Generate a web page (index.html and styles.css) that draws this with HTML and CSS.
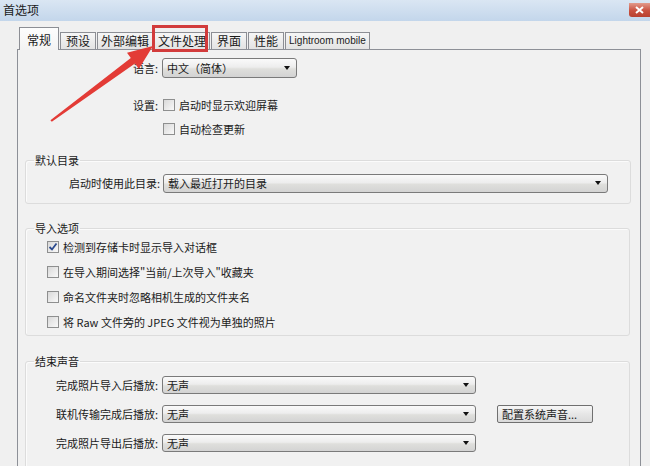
FILE: index.html
```html
<!DOCTYPE html>
<html lang="zh-CN">
<head>
    <meta charset="UTF-8">
    <title>首选项</title>
    <link rel="stylesheet" href="styles.css">
</head>
<body>
    <div class="titlebar">
        <span class="title">首选项</span>
        <span class="close">
            <svg width="9" height="8" viewBox="0 0 9 8"><path d="M1 1 L8 7 M8 1 L1 7" stroke="#fff" stroke-width="2"/></svg>
        </span>
    </div>

    <div class="tabs">
        <div class="tab active">常规</div>
        <div class="tab">预设</div>
        <div class="tab">外部编辑</div>
        <div class="tab marked">文件处理</div>
        <div class="tab">界面</div>
        <div class="tab">性能</div>
        <div class="tab latin">Lightroom mobile</div>
    </div>

    <div class="panel">
        <div class="row first">
            <span class="lbl">语言:</span>
            <div class="select lang"><span>中文（简体）</span><i class="caret"></i></div>
        </div>
        <div class="row second">
            <span class="lbl">设置:</span>
            <span class="check"></span><span class="opt">启动时显示欢迎屏幕</span>
        </div>
        <div class="row third">
            <span class="lbl"></span>
            <span class="check"></span><span class="opt">自动检查更新</span>
        </div>

        <fieldset class="group catalog">
            <legend>默认目录</legend>
            <div class="row">
                <span class="lbl">启动时使用此目录:</span>
                <div class="select wide"><span>载入最近打开的目录</span><i class="caret"></i></div>
            </div>
        </fieldset>

        <fieldset class="group import">
            <legend>导入选项</legend>
            <div class="crow">
                <span class="check on">
                    <svg width="10" height="10" viewBox="0 0 10 10"><path d="M1.5 5 L4 7.5 L8.5 1.5" fill="none" stroke="#2b4a8e" stroke-width="1.8"/></svg>
                </span>
                <span class="opt">检测到存储卡时显示导入对话框</span>
            </div>
            <div class="crow"><span class="check"></span><span class="opt">在导入期间选择"当前/上次导入"收藏夹</span></div>
            <div class="crow"><span class="check"></span><span class="opt">命名文件夹时忽略相机生成的文件夹名</span></div>
            <div class="crow"><span class="check"></span><span class="opt">将 Raw 文件旁的 JPEG 文件视为单独的照片</span></div>
        </fieldset>

        <fieldset class="group sounds">
            <legend>结束声音</legend>
            <div class="row">
                <span class="lbl">完成照片导入后播放:</span>
                <div class="select sound"><span>无声</span><i class="caret"></i></div>
            </div>
            <div class="row">
                <span class="lbl">联机传输完成后播放:</span>
                <div class="select sound"><span>无声</span><i class="caret"></i></div>
                <button class="btn">配置系统声音...</button>
            </div>
            <div class="row">
                <span class="lbl">完成照片导出后播放:</span>
                <div class="select sound"><span>无声</span><i class="caret"></i></div>
            </div>
        </fieldset>
    </div>

    <!-- red pointer towards the file handling tab -->
    <svg class="pointer" width="650" height="466" viewBox="0 0 650 466">
        <polygon points="153,46 127,52.7 130.8,58 50.4,120.2 51.8,121.8 135,63.6 138.8,68.9" fill="#e33b36"/>
    </svg>
</body>
</html>
```

FILE: styles.css
```css
* {
    box-sizing: border-box;
}
body {
    margin: 0;
    width: 650px;
    height: 466px;
    overflow: hidden;
    position: relative;
    display: flex;
    flex-direction: column;
    background-color: #f0f0f0;
    font-family: "Noto Sans CJK SC", "Liberation Sans", sans-serif;
    font-size: 11px;
    color: #1a1a1a;
}
.titlebar {
    height: 21px;
    flex: none;
    display: flex;
    justify-content: space-between;
    align-items: flex-start;
    padding-left: 3px;
    background: linear-gradient(#dae6f3, #c3d6eb);
}
.title {
    font-size: 12px;
    line-height: 20px;
}
.close {
    width: 21px;
    height: 14px;
    margin-top: 3px;
    display: flex;
    align-items: center;
    justify-content: center;
    border-radius: 0 0 0 3px;
    background: linear-gradient(#e29b8c, #c9503f 55%, #b8402f);
}
.tabs {
    height: 22px;
    flex: none;
    margin: 6px 0 0 17px;
    padding-left: 2px;
    display: flex;
    align-items: flex-end;
}
.tab {
    position: relative;
    height: 17px;
    min-width: 36px;
    padding: 0 3px;
    margin-left: 1px;
    line-height: 15px;
    text-align: center;
    font-size: 12px;
    border: 1px solid #8c8e94;
    border-bottom: none;
    background: linear-gradient(#f6f6f6, #e3e3e3);
}
.tab.active {
    z-index: 1;
    height: 23px;
    min-width: 40px;
    margin-left: 0;
    margin-bottom: -1px;
    padding: 4px 5px 0;
    background: linear-gradient(#fdfdfd, #f3f3f3);
}
.tab.latin {
    font-family: "Liberation Sans", sans-serif;
    font-size: 10px;
    padding: 0 3px;
}
.tab.marked::after {
    content: "";
    position: absolute;
    left: -3px;
    right: 1px;
    top: -8px;
    bottom: -3px;
    border: 3px solid #d23b3b;
}
.panel {
    flex: 1;
    width: 624px;
    margin-left: 17px;
    border: 1px solid #8d9097;
    border-bottom: none;
    background-color: #f1f1f1;
    overflow: hidden;
}
.row {
    display: flex;
    align-items: center;
    height: 20px;
}
.row.first {
    margin-top: 8px;
}
.row.second {
    margin-top: 17px;
}
.row.third {
    margin-top: 4px;
}
.lbl {
    width: 140px;
    margin-right: 4px;
    text-align: right;
    white-space: nowrap;
}
.check {
    width: 12px;
    height: 12px;
    margin-left: 1px;
    display: flex;
    align-items: center;
    justify-content: center;
    border: 1px solid #8e8f8f;
    background: linear-gradient(135deg, #d9d9d9, #f9f9f9);
}
.opt {
    margin-left: 4px;
    white-space: nowrap;
}
.select {
    height: 19px;
    display: flex;
    align-items: center;
    justify-content: space-between;
    padding: 0 6px 0 4px;
    border: 1px solid #7a7a7a;
    border-radius: 3px;
    background: linear-gradient(#fafafa, #ededed 45%, #dfdfdc 55%, #d3d3d3);
}
.select.lang {
    width: 135px;
    height: 20px;
}
.caret {
    width: 0;
    height: 0;
    border-left: 3.5px solid transparent;
    border-right: 3.5px solid transparent;
    border-top: 4px solid #111;
}

/* group boxes */
.group {
    margin: 0 10px 0 7px;
    padding: 0;
    border: 1px solid #dcdcdc;
    border-radius: 3px;
    box-shadow: inset 1px 1px 0 #fbfbfb;
}
.group legend {
    margin-left: 8px;
    padding: 0 1px;
    line-height: 12px;
}
.catalog {
    margin-top: 15px;
    padding: 7px 22px 10px 0;
}
.catalog .lbl {
    width: 134px;
    margin-right: 3px;
}
.select.wide {
    width: 445px;
}
.import {
    margin-top: 18px;
    padding-bottom: 1px;
}
.crow {
    height: 25px;
    display: flex;
    align-items: center;
    padding-left: 20px;
}
.sounds {
    margin-top: 19px;
    padding: 9px 0 40px;
}
.sounds .row {
    height: 18px;
}
.sounds .row + .row {
    margin-top: 11px;
}
.sounds .lbl {
    width: 132px;
}
.select.sound {
    width: 314px;
    height: 18px;
}
.btn {
    width: 96px;
    height: 18px;
    margin-left: 21px;
    padding: 0 4px;
    text-align: left;
    font-family: inherit;
    font-size: 11px;
    color: #1a1a1a;
    border: 1px solid #707070;
    border-radius: 2px;
    background: linear-gradient(#f7f7f7, #e6e6e6 50%, #dadada);
}
.pointer {
    position: absolute;
    top: 0;
    left: 0;
    pointer-events: none;
}
```
